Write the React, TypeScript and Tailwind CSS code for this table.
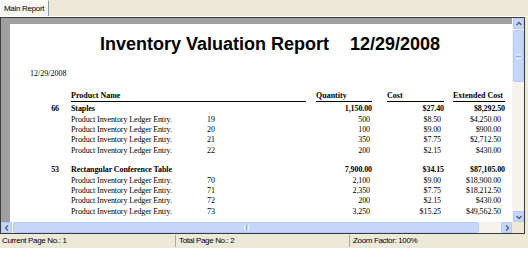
const serif = "font-['Liberation_Serif','Times_New_Roman',serif]";
const ui = "font-['Liberation_Sans',Arial,sans-serif]";

type Group = {
  id: string;
  name: string;
  qty: string;
  cost: string;
  ext: string;
  lines: { n: string; qty: string; cost: string; ext: string }[];
};

const groups: Group[] = [
  {
    id: "66",
    name: "Staples",
    qty: "1,150.00",
    cost: "$27.40",
    ext: "$8,292.50",
    lines: [
      { n: "19", qty: "500", cost: "$8.50", ext: "$4,250.00" },
      { n: "20", qty: "100", cost: "$9.00", ext: "$900.00" },
      { n: "21", qty: "350", cost: "$7.75", ext: "$2,712.50" },
      { n: "22", qty: "200", cost: "$2.15", ext: "$430.00" },
    ],
  },
  {
    id: "53",
    name: "Rectangular Conference Table",
    qty: "7,900.00",
    cost: "$34.15",
    ext: "$87,105.00",
    lines: [
      { n: "70", qty: "2,100", cost: "$9.00", ext: "$18,900.00" },
      { n: "71", qty: "2,350", cost: "$7.75", ext: "$18,212.50" },
      { n: "72", qty: "200", cost: "$2.15", ext: "$430.00" },
      { n: "73", qty: "3,250", cost: "$15.25", ext: "$49,562.50" },
    ],
  },
];

function Arrow({ dir }: { dir: "up" | "down" | "left" | "right" }) {
  const d = {
    up: "M1.5 5 L4 2.5 L6.5 5",
    down: "M1.5 3 L4 5.5 L6.5 3",
    left: "M5 1.5 L2.5 4 L5 6.5",
    right: "M3 1.5 L5.5 4 L3 6.5",
  }[dir];
  return (
    <svg width="8" height="8" viewBox="0 0 8 8">
      <path d={d} fill="none" stroke="#4d6185" strokeWidth="1.4" />
    </svg>
  );
}

function ScrollButton({ dir }: { dir: "up" | "down" | "left" | "right" }) {
  return (
    <div className="flex h-[11px] w-[11px] shrink-0 items-center justify-center rounded-[1px] border border-[#b4c8f6] bg-[#c6d6fb]">
      <Arrow dir={dir} />
    </div>
  );
}

function Row({
  num,
  name,
  qty,
  cost,
  ext,
  bold,
  entry,
}: {
  num?: string;
  name: React.ReactNode;
  qty: string;
  cost: string;
  ext: string;
  bold?: boolean;
  entry?: boolean;
}) {
  return (
    <div className={`flex h-[10.4px] items-center pl-[30px] leading-[10px] ${bold ? "font-bold" : ""}`}>
      <div className="w-[19px] text-right">{num}</div>
      <div className="ml-[12px] w-[235px] whitespace-nowrap">{name}</div>
      <div className={`ml-[10px] w-[56px] text-right ${entry ? "pr-[2px]" : ""}`}>{qty}</div>
      <div className={`ml-[15px] w-[57px] text-right ${entry ? "pr-[3px]" : ""}`}>{cost}</div>
      <div className={`ml-[9px] w-[52px] text-right ${entry ? "pr-[4px]" : ""}`}>{ext}</div>
    </div>
  );
}

function ReportPage() {
  return (
    <div className={`h-full flex-1 overflow-hidden bg-white text-black ${serif}`}>
      <div className={`mt-[10px] whitespace-nowrap pl-[90px] text-[18px] font-bold leading-[20px] ${ui}`}>
        Inventory Valuation Report<span className="ml-[21px]">12/29/2008</span>
      </div>
      <div className="mt-[15px] pl-[20px] text-[8px] leading-[10px]">12/29/2008</div>

      <div className="mt-[12px] flex pl-[61px] text-[8px] font-bold leading-[10px]">
        <div className="h-[11px] w-[235px] border-b border-black">Product Name</div>
        <div className="ml-[10px] h-[11px] w-[56px] border-b border-black">Quantity</div>
        <div className="ml-[15px] h-[11px] w-[57px] border-b border-black">Cost</div>
        <div className="ml-[9px] h-[11px] w-[52px] border-b border-black">Extended Cost</div>
      </div>

      <div className="mt-[2px] text-[8px] tracking-[-0.1px]">
        {groups.map((g, gi) => (
          <div key={g.id} className={gi > 0 ? "mt-[9px]" : ""}>
            <Row bold num={g.id} name={g.name} qty={g.qty} cost={g.cost} ext={g.ext} />
            {g.lines.map((l) => (
              <Row
                key={l.n}
                entry
                name={
                  <div className="flex">
                    <span className="w-[136px]">Product Inventory Ledger Entry.</span>
                    <span>{l.n}</span>
                  </div>
                }
                qty={l.qty}
                cost={l.cost}
                ext={l.ext}
              />
            ))}
          </div>
        ))}
      </div>
    </div>
  );
}

export default function App() {
  return (
    <div className={`h-[261px] w-[528px] overflow-hidden bg-white ${ui}`}>
      <div className="flex h-[248px] flex-col bg-[#ece9d8]">
        {/* tab strip */}
        <div className="flex h-[17px] items-start border-b border-white">
          <div className="flex h-[16px] w-[49px] items-center border-l border-r border-t border-l-white border-r-[#919b9c] border-t-white bg-[#f7f6f0] pl-[3px] text-[8px] tracking-[-0.3px] text-black">
            Main Report
          </div>
        </div>

        {/* viewer panel */}
        <div className="flex h-[217px] w-[525px] flex-col border border-[#3c3c3c]">
          <div className="flex h-[204px]">
            <div className="flex h-full w-[511px] bg-[#a0a0a0] pl-[9px] pt-[6px]">
              <ReportPage />
            </div>
            <div className="flex w-[12px] flex-col bg-[#f4f3ee] pl-[1px]">
              <ScrollButton dir="up" />
              <div className="mt-[1px] flex h-[52px] w-[11px] items-center justify-center rounded-[2px] border border-[#b4c8f6] bg-[#c6d6fb]">
                <div className="flex flex-col gap-[1px]">
                  <div className="h-px w-[5px] bg-[#eef4fe]" />
                  <div className="h-px w-[5px] bg-[#8cb0f8]" />
                  <div className="h-px w-[5px] bg-[#eef4fe]" />
                </div>
              </div>
              <div className="flex-1" />
              <ScrollButton dir="down" />
            </div>
          </div>
          <div className="flex h-[11px]">
            <div className="flex w-[511px] bg-[#f4f3ee]">
              <ScrollButton dir="left" />
              <div className="ml-[1px] flex w-[466px] items-center justify-center rounded-[2px] border border-[#b4c8f6] bg-[#c6d6fb]">
                <div className="flex gap-[1px]">
                  <div className="h-[5px] w-px bg-[#eef4fe]" />
                  <div className="h-[5px] w-px bg-[#8cb0f8]" />
                  <div className="h-[5px] w-px bg-[#eef4fe]" />
                </div>
              </div>
              <div className="flex-1" />
              <ScrollButton dir="right" />
            </div>
            <div className="flex-1 bg-[#ece9d8]" />
          </div>
        </div>

        {/* status bar */}
        <div className="flex h-[14px] items-center text-[8px] tracking-[-0.35px] text-black">
          <div className="w-[175px] pl-[2px]">Current Page No.: 1</div>
          <div className="h-[12px] w-px bg-[#aca899]" />
          <div className="w-[173px] pl-[3px]">Total Page No.: 2</div>
          <div className="h-[12px] w-px bg-[#aca899]" />
          <div className="pl-[3px]">Zoom Factor: 100%</div>
        </div>
      </div>
    </div>
  );
}
